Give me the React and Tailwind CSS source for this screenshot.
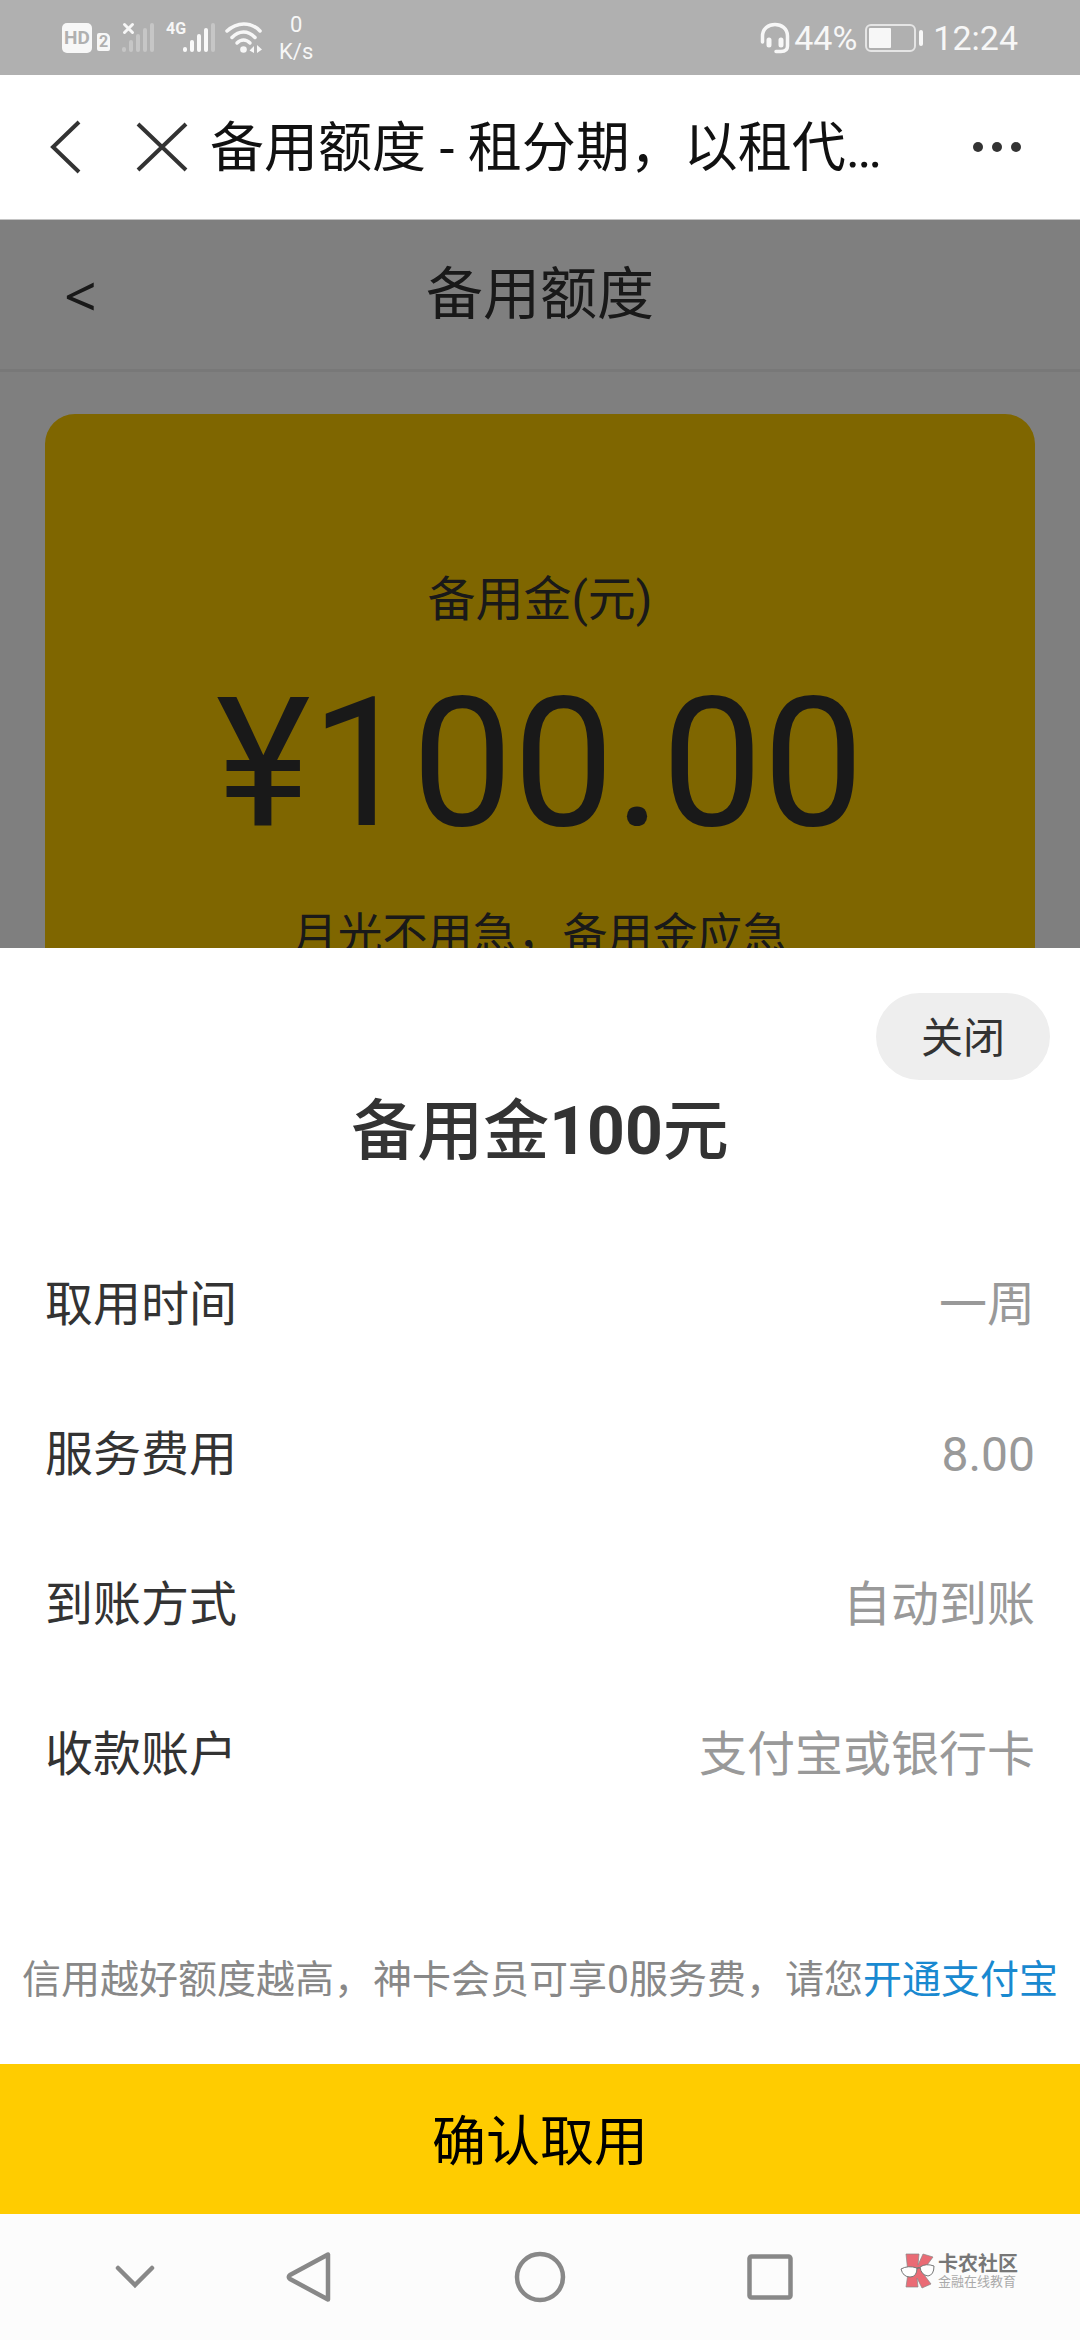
import React, { useState } from "react";

const details = [
  { label: "取用时间", value: "一周" },
  { label: "服务费用", value: "8.00" },
  { label: "到账方式", value: "自动到账" },
  { label: "收款账户", value: "支付宝或银行卡" },
];

const SignalBars = ({ active }) => (
  <svg width="34" height="31" viewBox="0 0 34 31" strokeWidth="4" strokeLinecap="round">
    {[27, 20, 14, 8, 3].map((top, i) => (
      <path
        key={top}
        d={`M${2 + i * 7} ${top}V28`}
        stroke="#fff"
        strokeOpacity={i < active ? 0.92 : 0.28}
      />
    ))}
  </svg>
);

const StatusBar = () => (
  <div className="flex h-[75px] items-center justify-between bg-[#b0b0b0] px-[62px] text-[#f7f7f7]">
    <div className="flex items-center">
      <span className="flex h-[30px] w-[30px] items-center justify-center rounded-[5px] bg-[#f7f7f7] text-[19px] font-bold leading-none text-[#b0b0b0]">
        HD
      </span>
      <span className="ml-[5px] mt-[8px] flex h-[18px] w-[13px] items-center justify-center rounded-[2px] rounded-tr-[5px] bg-[#f7f7f7] text-[16px] font-bold leading-none text-[#b0b0b0]">
        2
      </span>

      <span className="relative ml-[12px]">
        <SignalBars active={0} />
        <svg className="absolute left-0 top-0" width="13" height="13" viewBox="0 0 13 13">
          <path d="M2.5 2.5L10.5 10.5M10.5 2.5L2.5 10.5" stroke="#f7f7f7" strokeWidth="3" strokeLinecap="round" />
        </svg>
      </span>

      <span className="mb-[18px] ml-[10px] w-[17px] text-[16px] font-bold leading-none">4G</span>
      <SignalBars active={4} />

      <svg className="ml-[7px]" width="40" height="32" viewBox="0 0 40 32" fill="none">
        <path d="M3 9C13 -0.500 27 -0.500 36 9" stroke="#f7f7f7" strokeWidth="3.500" strokeLinecap="round" />
        <path d="M8 15.500C15 8 24 8 31 15.500" stroke="#f7f7f7" strokeWidth="3.500" strokeLinecap="round" />
        <path d="M13 21C17 17 22 17 26 21" stroke="#f7f7f7" strokeWidth="3.500" strokeLinecap="round" />
        <circle cx="19.500" cy="27.500" r="3.300" fill="#f7f7f7" />
        <path d="M30 24V31L25.500 28.500ZM33 23V31L38 27.500Z" fill="#f7f7f7" />
      </svg>

      <span className="ml-[15px] text-center text-[22px] leading-[27px]">
        0<br />K/s
      </span>
    </div>

    <div className="flex items-center text-[34px] leading-none">
      <svg width="30" height="32" viewBox="0 0 30 32" fill="none" stroke="#f7f7f7" strokeLinecap="round">
        <path d="M2.500 20V14C2.500 -1.500 27.500 -1.500 27.500 14V24C27.500 28 25 29.500 21 29.500H16" strokeWidth="3.500" />
        <path d="M9 18V23M21 18V23" strokeWidth="5" />
      </svg>
      <span className="ml-[4px]">44%</span>
      <svg className="ml-[8px]" width="58" height="28" viewBox="0 0 58 28" fill="none">
        <rect x="1" y="1" width="49" height="26" rx="5" stroke="#f7f7f7" strokeWidth="2" strokeOpacity="0.750" />
        <rect x="4" y="4" width="22" height="20" rx="1" fill="#f7f7f7" />
        <rect x="54" y="6" width="4" height="16" rx="2" fill="#f7f7f7" />
      </svg>
      <span className="ml-[10px]">12:24</span>
    </div>
  </div>
);

const TitleBar = () => (
  <div className="flex h-[145px] items-center border-b border-[#c4c4c4] bg-white pl-[48px] pr-[58px]">
    <button aria-label="返回">
      <svg width="34" height="54" viewBox="0 0 34 54" fill="none" stroke="#333" strokeWidth="4">
        <path d="M31 2L5 27L31 52" />
      </svg>
    </button>
    <button aria-label="关闭页面" className="ml-[54px]">
      <svg width="52" height="50" viewBox="0 0 52 50" fill="none" stroke="#333" strokeWidth="4">
        <path d="M2 2L50 48M50 2L2 48" />
      </svg>
    </button>
    <h1 className="ml-[22px] flex-1 whitespace-nowrap pt-[4px] text-[54px] leading-[72px] text-[#111]">
      备用额度 - 租分期，以租代…
    </h1>
    <button aria-label="更多">
      <svg width="50" height="12" viewBox="0 0 50 12" fill="#333">
        <circle cx="6" cy="6" r="5" />
        <circle cx="25" cy="6" r="5" />
        <circle cx="44" cy="6" r="5" />
      </svg>
    </button>
  </div>
);

const QuotaPage = () => (
  <div className="text-center text-[#333]">
    <div className="grid h-[152px] grid-cols-[1fr_auto_1fr] items-center border-b-[3px] border-[#f0f0f0] px-[64px] text-[57px] leading-[72px]">
      <button className="justify-self-start font-['Noto_Sans',sans-serif]">&lt;</button>
      <h2>备用额度</h2>
    </div>
    <div className="mx-[45px] mt-[42px] rounded-[30px] bg-[#ffcc00] pb-[120px] pt-[150px]">
      <p className="text-[48px] leading-[72px]">备用金(元)</p>
      <p className="mt-[23px] text-[180px] leading-[210px]">¥100.00</p>
      <p className="mt-[37px] text-[45px] leading-[60px]">月光不用急，备用金应急</p>
    </div>
  </div>
);

const WithdrawSheet = ({ onClose }) => (
  <section className="absolute inset-x-0 bottom-0 flex flex-col bg-white text-[#333]">
    <button
      onClick={onClose}
      className="mr-[30px] mt-[45px] h-[87px] self-end rounded-full bg-[#eee] px-[45px] pt-[4px] text-[42px]"
    >
      关闭
    </button>
    <h2 className="mt-[2px] text-center text-[66px] font-medium leading-[99px]">
      备用金<b>100</b>元
    </h2>

    <dl className="mt-[49px] px-[45px] text-[48px] leading-[150px]">
      {details.map((item) => (
        <div key={item.label} className="flex justify-between">
          <dt>{item.label}</dt>
          <dd className="text-[#999]">{item.value}</dd>
        </div>
      ))}
    </dl>

    <p className="mb-[54px] mt-[120px] whitespace-nowrap text-center text-[39px] leading-[60px] text-[#888]">
      信用越好额度越高，神卡会员可享0服务费，请您
      <a href="#alipay" className="text-[#1989d0]">
        开通支付宝
      </a>
    </p>
    <button className="h-[150px] bg-[#ffcc00] pt-[6px] text-[54px] text-black">确认取用</button>
  </section>
);

const Brand = () => (
  <div className="flex w-[195px] items-center gap-[3px] pb-[12px] pl-[15px]">
    <svg className="shrink-0" width="35" height="36" viewBox="0 0 35 36">
      <path d="M6 1H19L18 12L23 1L33 4L22 19L31 31L22 35L17 25L18 34H6L8 20Z" fill="#ea6b75" stroke="#888" strokeWidth="0.700" />
      <path d="M1 16Q8 12 17 15Q17 24 10 24Q3 24 1 16ZM20 14Q26 10 34 13Q34 22 28 23Q21 22 20 14Z" fill="#fff" stroke="#777" strokeWidth="1" />
      <path d="M17 16Q18 14 20 15" fill="none" stroke="#777" strokeWidth="1.500" />
    </svg>
    <div className="whitespace-nowrap">
      <p className="text-[20px] font-bold leading-[20px] text-[#777]">卡农社区</p>
      <p className="text-[13px] leading-[15px] text-[#aaa]">金融在线教育</p>
    </div>
  </div>
);

const NavBar = () => (
  <nav className="flex h-[126px] items-center bg-[#fcfcfc] pl-[75px]">
    <button aria-label="收起" className="flex w-[120px] justify-center">
      <svg width="42" height="26" viewBox="0 0 42 26" fill="none" stroke="#888" strokeWidth="4.500" strokeLinecap="round">
        <path d="M4 4L21 21L38 4" />
      </svg>
    </button>
    <div className="grid flex-1 grid-cols-3 justify-items-center">
      <button aria-label="后退">
        <svg width="52" height="52" viewBox="0 0 52 52" fill="none" stroke="#888" strokeWidth="4.500" strokeLinejoin="round">
          <path d="M44 3.500V48.500L6 28Q3.500 26 6 24Z" />
        </svg>
      </button>
      <button aria-label="主屏幕">
        <svg width="52" height="52" viewBox="0 0 52 52" fill="none" stroke="#888" strokeWidth="4.500">
          <circle cx="26" cy="26" r="23" />
        </svg>
      </button>
      <button aria-label="最近任务">
        <svg width="52" height="52" viewBox="0 0 52 52" fill="none" stroke="#888" strokeWidth="4.500">
          <rect x="5.500" y="5.500" width="41" height="41" rx="2" />
        </svg>
      </button>
    </div>
    <Brand />
  </nav>
);

const App = () => {
  const [isOpen, setIsOpen] = useState(true);

  return (
    <div className="flex min-h-screen flex-col bg-white font-['Roboto','Noto_Sans_CJK_SC',sans-serif]">
      <StatusBar />
      <TitleBar />
      <main className="relative flex-1 overflow-hidden">
        <QuotaPage />
        {isOpen && (
          <>
            <div className="absolute inset-0 bg-black/50" />
            <WithdrawSheet onClose={() => setIsOpen(false)} />
          </>
        )}
      </main>
      <NavBar />
    </div>
  );
};

export default App;
